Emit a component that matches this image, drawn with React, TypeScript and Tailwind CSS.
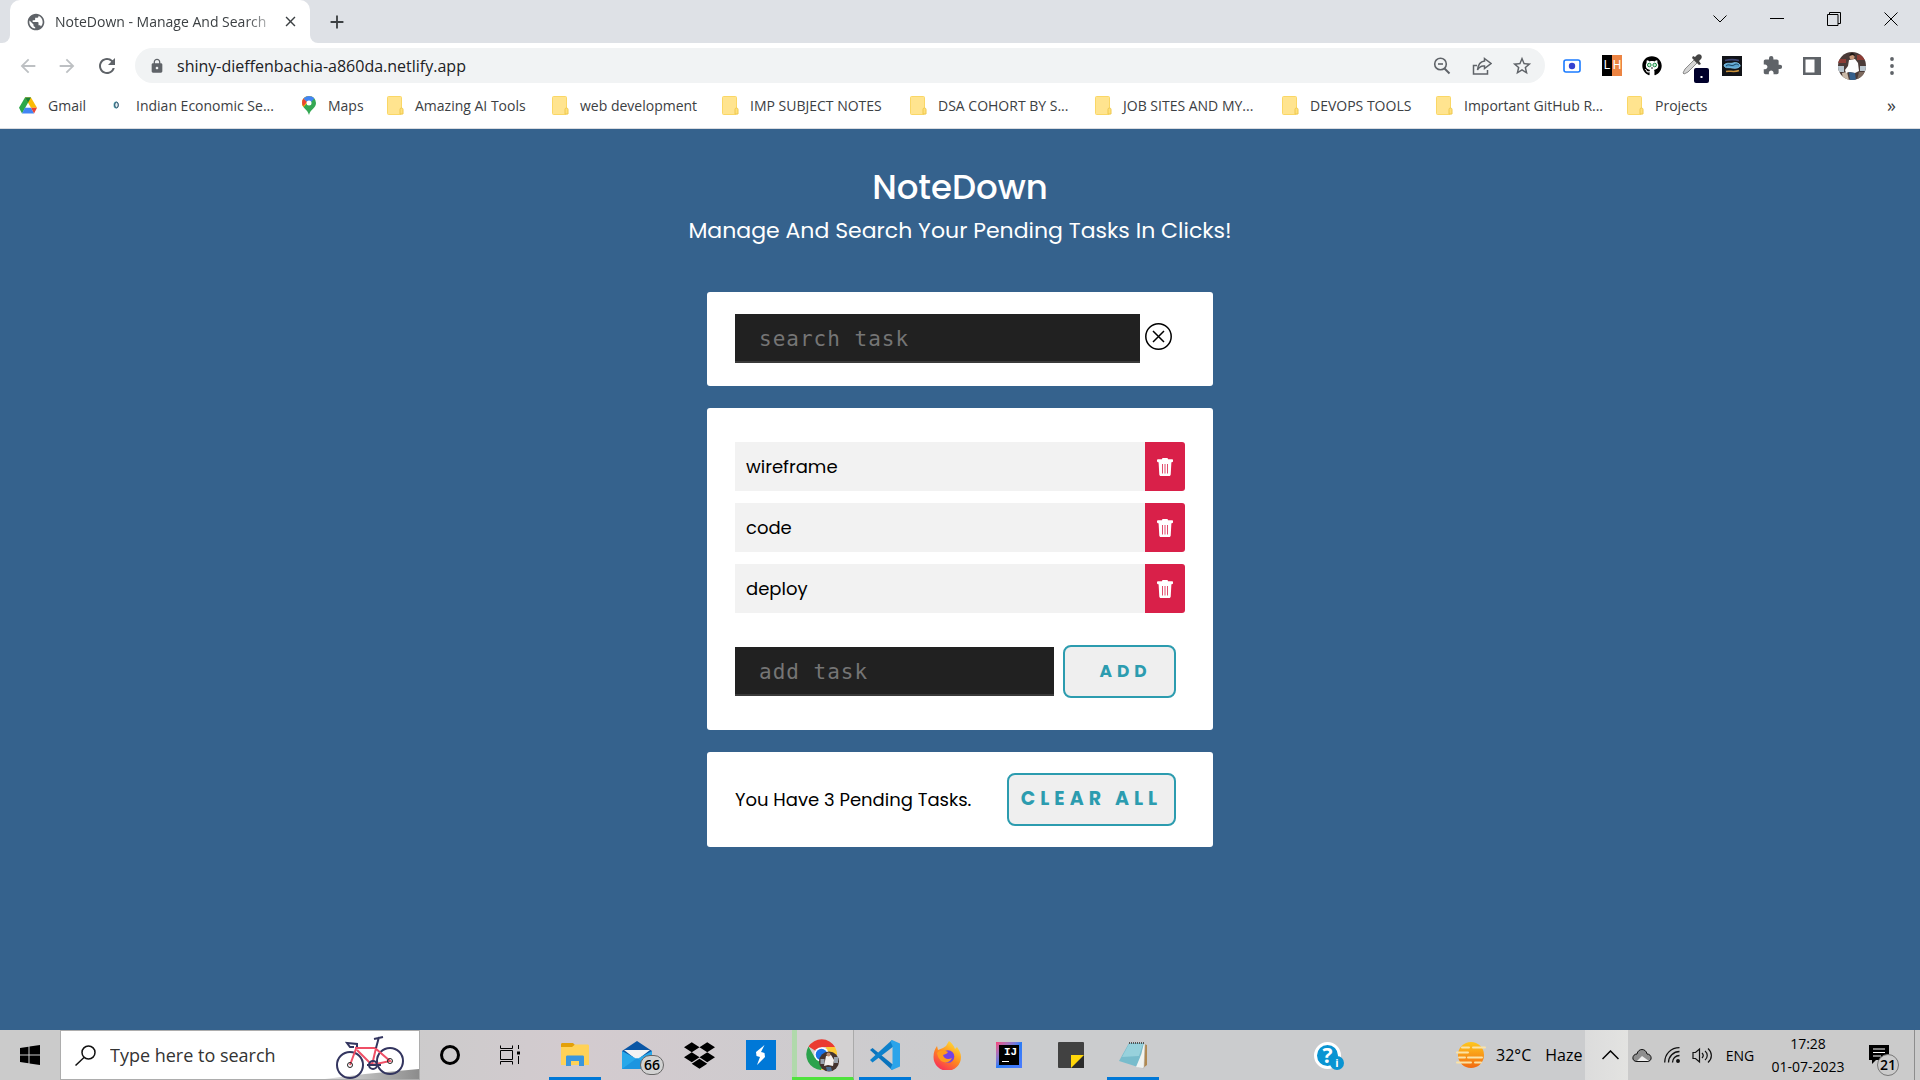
import React from "react";
import {
  MdExtension,
  MdLock,
  MdPublic,
  MdRefresh,
  MdStarOutline,
  MdArrowBack,
  MdArrowForward,
  MdClose,
  MdAdd,
} from "react-icons/md";
import { FaDropbox, FaGithub } from "react-icons/fa";

const geo = "font-['Poppins','Inter',sans-serif]";

/* ---------- Browser chrome ---------- */

function TabStrip() {
  return (
    <div className="flex h-[43px] items-stretch bg-[#dee1e6]">
      <div className="flex w-2.5 items-end bg-white">
        <div className="h-full w-full rounded-br-lg bg-[#dee1e6]" />
      </div>
      <div className="flex w-[300px] items-center rounded-t-[10px] bg-white pl-4 pr-2.5">
        <MdPublic className="size-[20px] shrink-0 text-[#5f6368]" />
        <span className="ml-[9px] flex-1 whitespace-nowrap text-[14px] text-[#3c4043] [mask-image:linear-gradient(to_right,black_85%,transparent)]">
          NoteDown - Manage And Search
        </span>
        <button aria-label="Close tab" className="flex size-5 items-center justify-center text-[#3c4043]">
          <MdClose className="size-[17px]" />
        </button>
      </div>
      <div className="flex w-2.5 bg-white">
        <div className="h-full w-full rounded-bl-lg bg-[#dee1e6]" />
      </div>
      <button aria-label="New tab" className="flex w-[34px] items-center justify-center text-[#3c4043]">
        <MdAdd className="size-[22px]" />
      </button>
      <div className="ml-auto flex h-[38px] pr-px text-black">
        <button aria-label="Search tabs" className="flex w-[57px] items-center justify-center">
          <svg width="14" height="8" fill="none" stroke="currentColor">
            <path d="M.5.5 7 7 13.5.5" />
          </svg>
        </button>
        <button aria-label="Minimize" className="flex w-[57px] items-center justify-center">
          <svg width="14" height="2" fill="currentColor">
            <path d="M0 0h14v1H0z" />
          </svg>
        </button>
        <button aria-label="Restore" className="flex w-[57px] items-center justify-center">
          <svg width="14" height="14" fill="none" stroke="currentColor">
            <path d="M.5 2.5h10.500v11H.5zM2.500 2.500V.5h11v11h-2.500" />
          </svg>
        </button>
        <button aria-label="Close" className="flex w-[57px] items-center justify-center">
          <svg width="14" height="14" fill="none" stroke="currentColor">
            <path d="m.5.5 13 13m0-13-13 13" />
          </svg>
        </button>
      </div>
    </div>
  );
}

const extensions: { name: string; icon: React.ReactNode }[] = [
  {
    name: "Recorder",
    icon: (
      <svg width="18" height="14" viewBox="0 0 18 14">
        <rect x="1" y="1" width="16" height="12" rx="2" fill="#fff" stroke="#1a7bff" strokeWidth="1.600" />
        <circle cx="9" cy="7" r="3.200" fill="#3542d0" />
      </svg>
    ),
  },
  {
    name: "LH",
    icon: (
      <span className="flex h-[21px] w-5 overflow-hidden font-['Roboto',sans-serif] text-[12px] leading-[21px] text-white">
        <span className="w-2.5 bg-black text-center">L</span>
        <span className="w-2.5 bg-[#ec8443] text-center">H</span>
      </span>
    ),
  },
  {
    name: "Refined GitHub",
    icon: (
      <span className="relative block size-5">
        <FaGithub className="size-5 text-black" />
        <svg className="absolute inset-0" width="20" height="20" viewBox="0 0 20 20">
          <path d="M5 5l2 1h6l2-1 .5 5c0 3-3 4-5.500 4s-5.500-1-5.500-4z" fill="#fff" />
          <circle cx="7.300" cy="9" r="1.800" fill="#cdf0d8" stroke="#1c8a45" />
          <circle cx="12.700" cy="9" r="1.800" fill="#cdf0d8" stroke="#1c8a45" />
          <path d="M9 12h2" stroke="#333" />
        </svg>
      </span>
    ),
  },
  {
    name: "Color picker",
    icon: (
      <svg className="ml-2 mt-1.5 shrink-0" width="28" height="30" viewBox="0 0 28 30">
        <path d="m1 19 2-4 9-9 3 3-9 9-4 2z" fill="#d4d4d4" stroke="#8a8a8a" />
        <path d="m10 4 7 7 2-1-2-3 2-2c1-1 1-3 0-4s-3-1-4 0l-2 2-2-1z" fill="#444" />
        <rect x="12" y="14" width="15" height="15" rx="2" fill="#00002b" />
        <rect x="18.500" y="22" width="2" height="2" fill="#fff" />
      </svg>
    ),
  },
  {
    name: "Chat helper",
    icon: (
      <svg width="20" height="20" viewBox="0 0 20 20">
        <rect width="20" height="20" fill="#111318" />
        <path d="M3 4.500c4-1 10-1 14 0" stroke="#3f4674" fill="none" strokeWidth="1.500" />
        <path d="M2 9c3-3 6-1 9-2s6 0 7 2-3 4-8 3-7 1-8-3z" fill="#5aa3cf" stroke="#8fd0f2" strokeWidth=".8" />
        <path d="M4 10c3-3 5 1 8-1s4 0 5 0" stroke="#1c4562" fill="none" />
        <path d="M4 15.500c3-1 9 1 13-1" stroke="#c99038" fill="none" strokeWidth="1.500" />
      </svg>
    ),
  },
  { name: "Extensions", icon: <MdExtension className="size-[21px] text-[#5f6368]" /> },
  {
    name: "Side panel",
    icon: (
      <svg width="18" height="18" viewBox="0 0 18 18">
        <path fillRule="evenodd" d="M0 0h18v18H0zM2.500 2.500v13h9v-13z" fill="#5f6368" />
      </svg>
    ),
  },
  {
    name: "Profile",
    icon: (
      <svg width="28" height="28" viewBox="0 0 28 28">
        <clipPath id="profile">
          <circle cx="14" cy="14" r="14" />
        </clipPath>
        <g clipPath="url(#profile)">
          <rect width="28" height="28" fill="#4a3b38" />
          <path d="M0 7h8v4H0zM19 3h9v5h-9z" fill="#8d3d36" />
          <path d="M0 14h6v6H0zM22 14h6v5h-6z" fill="#b9c6cf" />
          <path d="m4 21 5-1 2 8H5z" fill="#c9b9a8" />
          <path d="M21 20h7v8h-9z" fill="#7d6a5e" />
          <path d="m11 8 6-1 3 4 1 8-4 2-6-1-3 1-1-3 3-4z" fill="#fdfdfd" />
          <circle cx="14" cy="5" r="2.500" fill="#c6987a" />
          <path d="M11.500 4c0-4 5-4 5.500 0l-2.500-1z" fill="#1d1715" />
          <path d="m11 20 6 1 1 7h-6z" fill="#35608c" />
        </g>
      </svg>
    ),
  },
  {
    name: "Menu",
    icon: (
      <svg width="4" height="18" viewBox="0 0 4 18" fill="#5f6368">
        <circle cx="2" cy="2" r="1.900" />
        <circle cx="2" cy="9" r="1.900" />
        <circle cx="2" cy="16" r="1.900" />
      </svg>
    ),
  },
];

function Toolbar() {
  return (
    <div className="flex h-[45px] items-center bg-white px-2 text-[#5f6368]">
      <button aria-label="Back" className="flex w-[39px] justify-center text-[#bdc0c3]">
        <MdArrowBack className="size-[22px]" />
      </button>
      <button aria-label="Forward" className="flex w-10 justify-center text-[#bdc0c3]">
        <MdArrowForward className="size-[22px]" />
      </button>
      <button aria-label="Reload" className="flex w-10 justify-center">
        <MdRefresh className="size-[24px]" />
      </button>
      <div className="ml-2 flex h-[35px] flex-1 items-center rounded-full bg-[#f1f3f4] pl-3.5 pr-[3px]">
        <MdLock className="size-4 shrink-0" />
        <input
          aria-label="Address"
          defaultValue="shiny-dieffenbachia-a860da.netlify.app"
          className="ml-3 min-w-0 flex-1 bg-transparent text-[16px] text-[#202124] outline-none"
        />
        <button aria-label="Zoom out" className="flex w-10 justify-center">
          <svg width="18" height="18" viewBox="0 0 18 18" fill="none" stroke="currentColor" strokeWidth="1.600">
            <circle cx="7.500" cy="7" r="5.800" />
            <path d="M5 7h5" />
            <path d="m11.500 11.500 5 5" strokeWidth="2" />
          </svg>
        </button>
        <button aria-label="Share" className="flex w-10 justify-center">
          <svg width="20" height="18" viewBox="0 0 20 18" fill="none" stroke="currentColor" strokeWidth="1.500">
            <path d="M5 8.500H1.500V17h14v-4" />
            <path d="M12.500 1.500 19 6.500l-6.500 5V9C9 8.500 7 10 5.500 13 6 8 8.500 4.500 12.500 4z" />
          </svg>
        </button>
        <button aria-label="Bookmark" className="flex w-10 justify-center">
          <MdStarOutline className="size-[22px]" />
        </button>
      </div>
      <div className="ml-[7px] flex">
        {extensions.map((e) => (
          <button key={e.name} aria-label={e.name} className="flex h-8 w-10 items-center justify-center">
            {e.icon}
          </button>
        ))}
      </div>
    </div>
  );
}

function Folder() {
  return (
    <svg width="17" height="19" viewBox="0 0 17 19">
      <rect x=".5" y=".5" width="14" height="18" rx="1" fill="#ffe48f" stroke="#fad766" />
      <path d="M13 13.500c0-2 3-2 3 0V18h-3z" fill="#ffe07a" stroke="#eec84e" />
    </svg>
  );
}

function DriveIcon() {
  return (
    <svg width="19" height="17" viewBox="0 0 19 17">
      <path d="M6.300 0h6.300L3.200 17 0 11z" fill="#2ba84a" />
      <path d="M6.300 0h6.300L19 11h-6.300z" fill="#fbbc04" />
      <path d="M6.300 0h6.300L9.500 5.500z" fill="#188038" />
      <path d="M3.200 17h12.700l-3.200-6H6.300z" fill="#4285f4" />
      <path d="M15.900 17 19 11h-6.300z" fill="#ea4335" />
    </svg>
  );
}

function MapsIcon() {
  return (
    <svg width="14" height="19" viewBox="0 0 14 19">
      <path d="M7 0a7 7 0 0 1 7 7c0 5-5.500 6-7 12C5.500 13 0 12 0 7a7 7 0 0 1 7-7z" fill="#34a853" />
      <path d="M1.700 11 9.500 2l3 .8A7 7 0 0 0 7 0C3 0 0 3 0 7c0 1.500.7 3 1.700 4z" fill="#fbbc04" />
      <path d="M1.500 2.500 5 6 1.200 10.300C-.5 7 0 4.500 1.500 2.500z" fill="#ea4335" />
      <path d="M1.500 2.500C4-.5 9-1 12.400 2.500L7 8z" fill="#4285f4" />
      <circle cx="7" cy="7" r="2.500" fill="#fff" />
    </svg>
  );
}

function DotIcon() {
  return (
    <svg width="6" height="8" viewBox="0 0 6 8">
      <ellipse cx="3" cy="4" rx="2.500" ry="3.500" fill="#57b3bd" />
      <ellipse cx="3.500" cy="4" rx="1.800" ry="2.800" fill="#dff0f2" stroke="#2b4763" />
    </svg>
  );
}

const bookmarks = [
  { label: "Gmail", icon: <DriveIcon />, width: "w-[88px]", slot: "w-[18px]" },
  { label: "Indian Economic Se...", icon: <DotIcon />, width: "w-[194px]", slot: "w-[18px]" },
  { label: "Maps", icon: <MapsIcon />, width: "w-[86px]", slot: "w-4" },
  { label: "Amazing AI Tools", icon: <Folder />, width: "w-[165px]", slot: "w-[17px]" },
  { label: "web development", icon: <Folder />, width: "w-[170px]", slot: "w-[17px]" },
  { label: "IMP SUBJECT NOTES", icon: <Folder />, width: "w-[188px]", slot: "w-[17px]" },
  { label: "DSA COHORT BY S...", icon: <Folder />, width: "w-[185px]", slot: "w-[17px]" },
  { label: "JOB SITES AND MY...", icon: <Folder />, width: "w-[187px]", slot: "w-[17px]" },
  { label: "DEVOPS TOOLS", icon: <Folder />, width: "w-[154px]", slot: "w-[17px]" },
  { label: "Important GitHub R...", icon: <Folder />, width: "w-[191px]", slot: "w-[17px]" },
  { label: "Projects", icon: <Folder />, width: "w-[100px]", slot: "w-[17px]" },
];

function BookmarksBar() {
  return (
    <nav className="flex h-[41px] items-center border-b border-[#dadce0] bg-white pb-1.5 pl-[19px] pr-5 text-[14px] text-[#3c4043]">
      {bookmarks.map((b) => (
        <a key={b.label} href="#" className={`flex items-center whitespace-nowrap ${b.width}`}>
          <span className={`flex shrink-0 justify-center ${b.slot}`}>{b.icon}</span>
          <span className="ml-[11px]">{b.label}</span>
        </a>
      ))}
      <button aria-label="More bookmarks" className="ml-auto pr-1 text-[18px] leading-none">
        »
      </button>
    </nav>
  );
}

/* ---------- Page ---------- */

const tasks = ["wireframe", "code", "deploy"];

const field =
  "h-[49px] border-b-2 border-[#3a3a3a] bg-[#212121] pl-6 pt-0.5 font-['DejaVu_Sans_Mono',monospace] text-[21px] tracking-[1px] text-white outline-none placeholder:text-[#757575]";
const pill = "h-[53px] rounded-lg border-2 border-[#2c9caf] bg-[#efefef] font-bold text-[#2c9caf]";

function TrashIcon() {
  return (
    <svg width="16" height="18" viewBox="0 0 16 18">
      <path
        fill="currentColor"
        fillRule="evenodd"
        d="M5 1.200C5 .5 5.500 0 6.200 0h3.600c.7 0 1.200.5 1.200 1.200h4c.6 0 1 .4 1 .9v1.200c0 .5-.4.900-1 .9h-.6l-.7 12.300c0 .8-.7 1.500-1.500 1.500H3.800c-.8 0-1.500-.7-1.500-1.500L1.600 4.200H1c-.6 0-1-.4-1-.9V2.100c0-.5.4-.9 1-.9zM5 6v9.500h.800V6zM7.600 6v9.500h.800V6zM10.200 6v9.500h.800V6z"
      />
    </svg>
  );
}

function NotesPage() {
  return (
    <main className={`flex flex-1 flex-col items-center bg-[#35628d] pt-9 text-black ${geo}`}>
      <h1 className="text-[34px] font-medium leading-[44px] text-white">NoteDown</h1>
      <p className="text-[22px] leading-[43px] text-white">Manage And Search Your Pending Tasks In Clicks!</p>

      <div className="mt-10 flex w-full max-w-[506px] flex-col gap-[22px]">
        <section className="flex items-start gap-[5px] rounded-[3px] bg-white px-7 pb-[23px] pt-[22px]">
          <input aria-label="Search task" placeholder="search task" className={`w-[405px] ${field}`} />
          <button aria-label="Clear search" className="mt-[9px]">
            <svg width="27" height="27" viewBox="0 0 27 27" fill="none" stroke="#000" strokeWidth="1.500">
              <circle cx="13.500" cy="13.500" r="12.700" />
              <path d="m8 8 11 11M19 8 8 19" />
            </svg>
          </button>
        </section>

        <section className="rounded-[3px] bg-white px-7 pb-8 pt-[34px]">
          <ul className="flex flex-col gap-3">
            {tasks.map((t) => (
              <li key={t} className="flex h-[49px] items-stretch">
                <span className="flex flex-1 items-center bg-[#f2f2f2] pl-[11px] text-[18px]">{t}</span>
                <button
                  aria-label={`Delete ${t}`}
                  className="flex w-10 items-center justify-center rounded-r-[3px] bg-[#d92049] text-white"
                >
                  <TrashIcon />
                </button>
              </li>
            ))}
          </ul>
          <form className="mt-8 flex items-center gap-[9px]" onSubmit={(e) => e.preventDefault()}>
            <input aria-label="Add task" placeholder="add task" className={`w-[319px] ${field}`} />
            <button className={`w-[113px] pl-3 text-[17px] tracking-[5px] ${pill}`}>ADD</button>
          </form>
        </section>

        <section className="flex items-center justify-between rounded-[3px] bg-white py-[21px] pl-7 pr-[37px] text-[18px]">
          <p>You Have 3 Pending Tasks.</p>
          <button className={`w-[169px] whitespace-nowrap text-[19px] tracking-[5px] ${pill}`}>CLEAR ALL</button>
        </section>
      </div>
    </main>
  );
}

/* ---------- Taskbar ---------- */

function Bike() {
  return (
    <svg width="94" height="46" viewBox="0 0 94 46" fill="none">
      <defs>
        <linearGradient id="ground">
          <stop stopColor="#e0e0e0" />
          <stop offset="1" stopColor="#8c8c8c" />
        </linearGradient>
      </defs>
      <path d="M0 46 40 41 94 36v10z" fill="url(#ground)" />
      <g stroke="#33355f" strokeWidth="2">
        <circle cx="25" cy="32" r="13" />
        <circle cx="65" cy="28" r="13" />
      </g>
      <path d="M25 32 32 13M30 15h21l-4 17M32 17l15 15 18-4-15-13" stroke="#ef4f66" strokeWidth="2" />
      <circle cx="25" cy="32" r="2.500" stroke="#222" />
      <circle cx="65" cy="28" r="2.500" stroke="#222" />
      <circle cx="48" cy="32" r="4" stroke="#33355f" strokeWidth="2" />
      <path d="M51 15 54 4M49 6l9-2M32 14v-3l-10-1 3 4h4M42 32h14" stroke="#33355f" strokeWidth="2" />
    </svg>
  );
}

function ExplorerIcon() {
  return (
    <svg width="28" height="24" viewBox="0 0 28 24">
      <path d="M0 1.500C0 .5.500 0 1.500 0H12l3 3-3 4H0z" fill="#e3a008" />
      <path d="M0 4h11l3-2.500h12.500c1 0 1.500.5 1.500 1.500v19H0z" fill="#ffd257" />
      <path d="M5 23V14c0-1 .5-1.500 1.500-1.500h15c1 0 1.500.5 1.500 1.500v9h-5v-5h-8v5z" fill="#3a96dd" />
    </svg>
  );
}

function MailIcon() {
  return (
    <span className="relative block h-7 w-[30px]">
      <svg width="30" height="28" viewBox="0 0 30 28">
        <path d="M0 10 15 0l15 10v6H0z" fill="#0a56a5" />
        <path d="M2 9h26L15 19z" fill="#f3f3f3" />
        <path d="M0 10 15 18l15-8v18H0z" fill="#28a8ea" />
        <path d="M0 28 15 17l15 11z" fill="#1c95e0" />
      </svg>
      <span className="absolute -right-3 top-3.5 flex h-5 w-6 items-center justify-center rounded-full border border-[#666] bg-[#d2d2d2] text-[14px] font-semibold leading-none text-black">
        66
      </span>
    </span>
  );
}

function BoltIcon() {
  return (
    <svg width="30" height="30" viewBox="0 0 30 30">
      <rect width="30" height="30" fill="#0078d7" />
      <path d="M18.500 5 10 12l.5 4 3.500 1-3 8 8-8-.5-4-3.500-1z" fill="#fff" />
    </svg>
  );
}

function ChromeIcon() {
  return (
    <svg width="33" height="33" viewBox="0 0 33 33">
      <path d="M15.500 15.500 2.500 7.500A15.500 15.500 0 0 1 29 8H15.500z" fill="#ea3b30" />
      <path d="M2.500 7.500A15.500 15.500 0 0 0 15 31l6-11-12-1z" fill="#2ba24c" />
      <path d="M29 8A15.500 15.500 0 0 1 15 31l7.500-12L20 8z" fill="#fcc934" />
      <circle cx="15.500" cy="15.500" r="7.300" fill="#fff" />
      <circle cx="15.500" cy="15.500" r="5.800" fill="#1a73e8" />
      <circle cx="23" cy="22.500" r="10" fill="#45342f" />
      <path d="M14.500 20h4v5h-4zM28 18h4v6h-4z" fill="#9aa3ad" />
      <path d="m20 17 5-1 3 5-1 6-5-1-4 1 1-5z" fill="#f4efec" />
      <circle cx="22.500" cy="15.500" r="2" fill="#b98c70" />
      <path d="M20 28h5l1 4h-5z" fill="#4a6c92" />
    </svg>
  );
}

function VsCodeIcon() {
  return (
    <svg width="30" height="30" viewBox="0 0 30 30">
      <path d="m0 10 2.500-2L24 25.500 22 30z" fill="#0a74bd" />
      <path d="m0 20 2.500 2.500L24 6l-2-6z" fill="#0d81cb" />
      <path d="m22 0 8 3.500v23L22 30l-1.500-1.500L22.500 24V6l-2-4.500z" fill="#2ba4ea" />
    </svg>
  );
}

function FirefoxIcon() {
  return (
    <svg width="28" height="29" viewBox="0 0 28 29">
      <defs>
        <linearGradient id="fox" x1=".8" y1="0" x2=".2" y2="1">
          <stop stopColor="#ffe53a" />
          <stop offset=".5" stopColor="#ff8a1e" />
          <stop offset="1" stopColor="#f8255f" />
        </linearGradient>
      </defs>
      <path
        d="M16 0c3 2 5 5 6 8l2-2c2 3 4 6 4 10a13.500 13.500 0 0 1-27.500 0C.5 11 2 8 4 5l1 4 5-2 3-2 3-5z"
        fill="url(#fox)"
      />
      <circle cx="15" cy="15.500" r="6.300" fill="#7542e5" />
      <path d="M4 12c3-3 7-3 11-1-1 2-3 2-5 3 1 4 5 5 9 3-3 7-13 6-15-5z" fill="#ff9a1f" />
    </svg>
  );
}

function IdeaIcon() {
  return (
    <span className="flex size-[26px] items-center justify-center bg-linear-to-br from-[#f8407a] via-[#2b7cf5] to-[#4b7cff]">
      <span className="flex size-5 flex-col bg-black pl-[3px] pt-0.5 font-['Liberation_Mono',monospace] text-[11px] font-bold leading-[11px] text-white">
        IJ
        <span className="mt-[3px] h-px w-[7px] bg-white" />
      </span>
    </span>
  );
}

function StickyIcon() {
  return (
    <svg width="26" height="26" viewBox="0 0 26 26">
      <rect width="26" height="26" rx="1" fill="#414141" />
      <path d="M26 13v13H13z" fill="#2b2b2b" />
      <path d="M13 13h13L13 26z" fill="#ffd60a" />
    </svg>
  );
}

function NotepadIcon() {
  return (
    <svg width="28" height="27" viewBox="0 0 28 27">
      <path d="m25 2 3 1v20l-4 3z" fill="#b08850" />
      <path d="m24 1 2 1-1 24-6-1z" fill="#f4f4ee" stroke="#aaa" strokeWidth=".5" />
      <path d="M10 1h15l-6 24L0 19z" fill="#78bccc" />
      <path d="M10 2h14l-4 12L3 15z" fill="#a4dae3" opacity=".7" />
      <path d="m17 25 5-12 2 13z" fill="#eef3f3" />
      <path d="M10 1h15" stroke="#555" strokeWidth="2" strokeDasharray="1 1" />
    </svg>
  );
}

const apps: { name: string; icon: React.ReactNode; open?: boolean; active?: boolean }[] = [
  { name: "File Explorer", icon: <ExplorerIcon />, open: true },
  { name: "Mail", icon: <MailIcon /> },
  { name: "Dropbox", icon: <FaDropbox className="size-[31px] text-black" /> },
  { name: "Shortcut", icon: <BoltIcon /> },
  { name: "Chrome", icon: <ChromeIcon />, active: true },
  { name: "Visual Studio Code", icon: <VsCodeIcon />, open: true },
  { name: "Firefox", icon: <FirefoxIcon /> },
  { name: "IntelliJ IDEA", icon: <IdeaIcon /> },
  { name: "Sticky Notes", icon: <StickyIcon /> },
  { name: "Notepad", icon: <NotepadIcon />, open: true },
];

function Taskbar() {
  return (
    <footer className="flex h-[50px] items-stretch bg-linear-to-r from-[#cbcbcb] from-20% via-[#d3cbcf] via-30% to-[#cbccce] to-50% text-black">
      <button aria-label="Start" className="flex w-[60px] items-center justify-center">
        <svg width="20" height="20" viewBox="0 0 20 20">
          <path d="m0 3 8.500-1.200v7.700H0zM9.500 1.600 20 0v9.500H9.500zM0 10.500h8.500v7.700L0 17zM9.500 10.500H20V20L9.500 18.400z" />
        </svg>
      </button>
      <div className="relative flex w-[360px] items-center border border-[#adadad] bg-white pl-3.5">
        <svg width="21" height="21" viewBox="0 0 21 21" fill="none" stroke="#111" strokeWidth="1.500">
          <circle cx="13.500" cy="7.500" r="6.500" />
          <path d="M9 12.500.5 20.500" />
        </svg>
        <input
          aria-label="Type here to search"
          placeholder="Type here to search"
          className="ml-3.5 w-[200px] bg-transparent text-[18px] outline-none placeholder:text-[#333]"
        />
        <div className="absolute bottom-0 right-0">
          <Bike />
        </div>
      </div>
      <button aria-label="Cortana" className="flex w-[60px] items-center justify-center">
        <span className="size-5 rounded-full border-[3px] border-black" />
      </button>
      <button aria-label="Task View" className="flex w-16 items-center pl-5">
        <svg width="20" height="20" viewBox="0 0 20 20" fill="none" stroke="#000">
          <path d="M.5.500v3h12v-3M.5 19.500v-3h12v3M.5 5.500h12v9H.5zM18.500 0v4M18.500 11v8" />
          <rect x="17.500" y="7" width="2" height="2" fill="#000" />
        </svg>
      </button>
      {apps.map((a) => (
        <button
          key={a.name}
          aria-label={a.name}
          className={`relative flex w-[62px] items-center justify-center ${
            a.active
              ? "border-b-[3px] border-r border-b-[#4fe23d] border-r-[#aaa] bg-linear-to-r from-[#b0d9ab] from-8% to-[#d3d1d2] to-8% pt-[3px]"
              : ""
          }`}
        >
          {a.icon}
          {a.open && <span className="absolute inset-x-[5px] bottom-0 h-[3px] bg-[#0078d7]" />}
        </button>
      ))}
      <button aria-label="Help" className="ml-auto mr-[115px] flex items-center">
        <span className="relative flex size-[27px] items-center justify-center rounded-full border-[3px] border-white bg-[#0a94d2] text-[21px] font-bold leading-none text-white">
          ?
          <span className="absolute -bottom-1 -right-1.5 flex size-3.5 items-center justify-center rounded-full bg-[#0a94d2] text-[11px] font-bold leading-none">
            i
          </span>
        </span>
      </button>
      <button className="flex w-[129px] items-center whitespace-nowrap text-[16px]">
        <svg className="shrink-0" width="30" height="26" viewBox="0 0 30 26">
          <defs>
            <linearGradient id="sun" x2="0" y2="1">
              <stop stopColor="#ffc71e" />
              <stop offset="1" stopColor="#f26a12" />
            </linearGradient>
          </defs>
          <circle cx="15" cy="13" r="13" fill="url(#sun)" />
          <path
            d="M6 5.500h7M17 5.500h12M1 10.500h11M3 15.500h6M12 15.500h14M1 20.500h14M19 20.500h6"
            stroke="#fbe3a6"
            strokeWidth="2"
            strokeLinecap="round"
          />
        </svg>
        <span className="ml-2.5">32°C</span>
        <span className="ml-3.5">Haze</span>
      </button>
      <div className="flex w-[43px] items-center justify-center bg-linear-to-r from-[#dcdcdc] to-[#e3e3e1] pl-2">
        <svg width="17" height="10" viewBox="0 0 17 10" fill="none" stroke="#000" strokeWidth="1.500">
          <path d="m.5 9 8-8 8 8" />
        </svg>
      </div>
      <div className="flex w-[292px] items-stretch bg-[#cbcbcb]">
        <div className="flex w-[98px] items-center gap-3 pl-1">
          <svg width="20" height="15" viewBox="0 0 20 15" stroke="#111">
            <path d="M5 13.500C-1 13.500 0 6 5 6c1-6 9-6 10 0 5 0 6 7.500 0 7.500z" fill="#8e8e8e" />
            <path d="m5 13 5-5 7 5z" fill="#eee" stroke="none" />
          </svg>
          <svg width="16" height="16" viewBox="0 0 16 16" fill="none" stroke="#111" strokeWidth="1.300">
            <path d="M.7 15.500C.7 7 7 .7 15.500.7M4.500 15.500c0-6 5-11 11-11M8.500 15.500c0-4 3-7 7-7" />
            <circle cx="14" cy="14" r="1.300" fill="#111" />
          </svg>
          <svg width="21" height="17" viewBox="0 0 21 17" fill="none" stroke="#111" strokeWidth="1.200">
            <path d="M1 5.500h2.500l4-3.500v13l-4-3.500H1zM10 6c1.500 1.500 1.500 3.500 0 5M13 4c3 2.500 3 6.500 0 9M16 1.500c4.500 4 4.500 10 0 14" />
          </svg>
        </div>
        <span className="flex w-[28px] items-center justify-center text-[14px]">ENG</span>
        <div className="flex w-[108px] flex-col items-center justify-center text-[14px] leading-[23px]">
          <span>17:28</span>
          <span>01-07-2023</span>
        </div>
        <button aria-label="Notifications" className="relative ml-auto mr-[25px] w-5">
          <svg width="20" height="20" viewBox="0 0 20 20">
            <path d="M0 0h20v15H7l-4 4v-4H0z" />
            <path d="M4 4h12M4 7.500h12M4 11h8" stroke="#fff" />
          </svg>
          <span className="absolute left-2 top-6 flex size-[22px] items-center justify-center rounded-full border border-[#777] bg-[#cbcbcb] text-[14px] font-semibold leading-none">
            21
          </span>
        </button>
        <span className="w-[6px] border-l border-[#8d8d8d]" />
      </div>
    </footer>
  );
}

export default function App() {
  return (
    <div className="flex min-h-screen flex-col font-['Segoe_UI','Open_Sans',sans-serif]">
      <header>
        <TabStrip />
        <Toolbar />
        <BookmarksBar />
      </header>
      <NotesPage />
      <Taskbar />
    </div>
  );
}
